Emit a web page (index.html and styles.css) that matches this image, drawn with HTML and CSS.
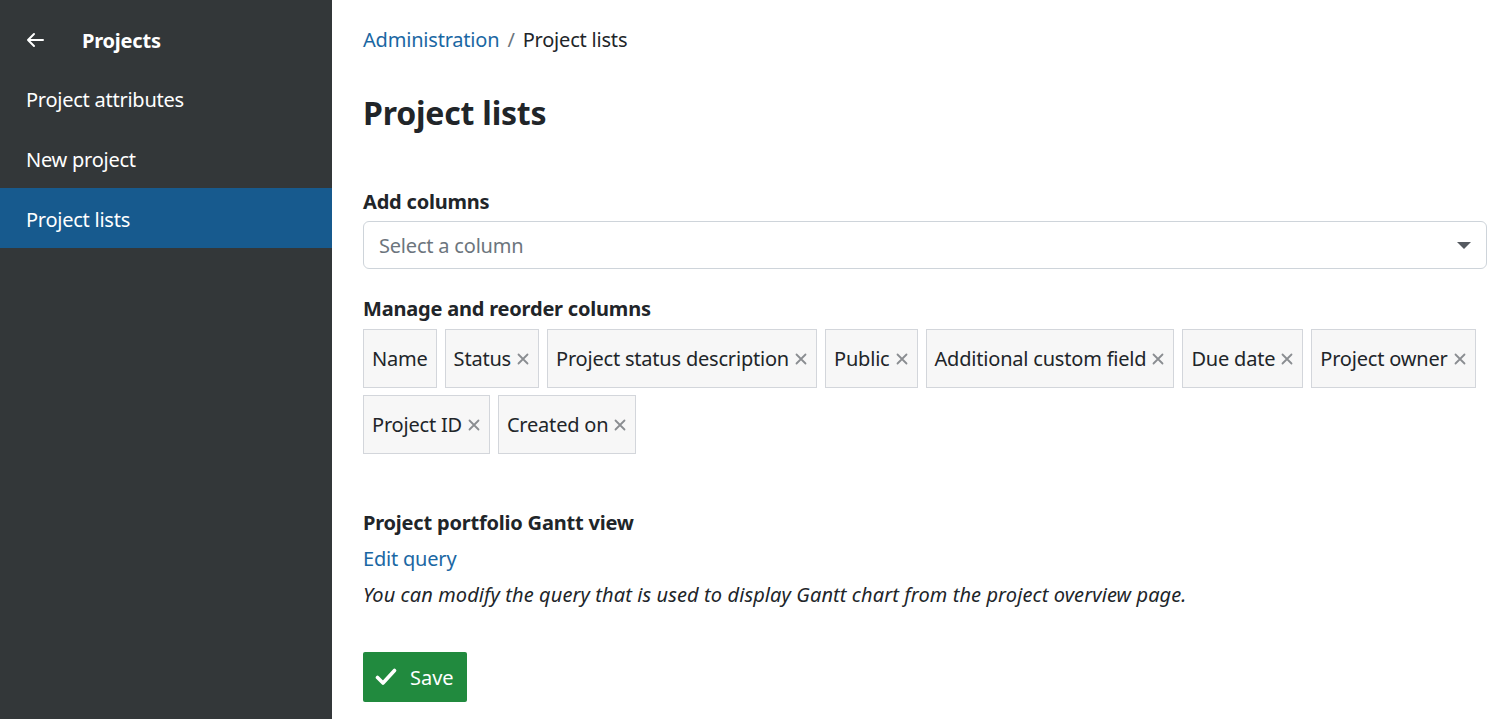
FILE: index.html
```html
<!DOCTYPE html>
<html>
<head>
<meta charset="utf-8">
<link rel="stylesheet" href="styles.css">
</head>
<body>
<div class="layout">
  <nav class="sidebar">
    <div class="side-head">
      <svg class="back" width="18" height="16" viewBox="0 0 18 16"><path d="M17 8H2M8 2L2 8l6 6" fill="none" stroke="#fff" stroke-width="2" stroke-linecap="round" stroke-linejoin="round"/></svg>
      <span class="side-title">Projects</span>
    </div>
    <a class="side-item">Project attributes</a>
    <a class="side-item">New project</a>
    <a class="side-item active">Project lists</a>
  </nav>
  <main class="content">
    <div class="breadcrumb"><a class="link">Administration</a><span class="sep">/</span><span>Project lists</span></div>
    <h1 class="title">Project lists</h1>
    <div class="label">Add columns</div>
    <div class="select">
      <span class="placeholder">Select a column</span>
      <span class="caret"></span>
    </div>
    <div class="label label2">Manage and reorder columns</div>
    <div class="chips">
      <span class="chip">Name</span>
      <span class="chip">Status<svg class="x" viewBox="0 0 12 12"><path d="M1.5 1.5l9 9M10.5 1.5l-9 9"/></svg></span>
      <span class="chip">Project status description<svg class="x" viewBox="0 0 12 12"><path d="M1.5 1.5l9 9M10.5 1.5l-9 9"/></svg></span>
      <span class="chip">Public<svg class="x" viewBox="0 0 12 12"><path d="M1.5 1.5l9 9M10.5 1.5l-9 9"/></svg></span>
      <span class="chip">Additional custom field<svg class="x" viewBox="0 0 12 12"><path d="M1.5 1.5l9 9M10.5 1.5l-9 9"/></svg></span>
      <span class="chip">Due date<svg class="x" viewBox="0 0 12 12"><path d="M1.5 1.5l9 9M10.5 1.5l-9 9"/></svg></span>
      <span class="chip">Project owner<svg class="x" viewBox="0 0 12 12"><path d="M1.5 1.5l9 9M10.5 1.5l-9 9"/></svg></span>
      <span class="chip">Project ID<svg class="x" viewBox="0 0 12 12"><path d="M1.5 1.5l9 9M10.5 1.5l-9 9"/></svg></span>
      <span class="chip">Created on<svg class="x" viewBox="0 0 12 12"><path d="M1.5 1.5l9 9M10.5 1.5l-9 9"/></svg></span>
    </div>
    <div class="label label3">Project portfolio Gantt view</div>
    <a class="link edit">Edit query</a>
    <p class="hint">You can modify the query that is used to display Gantt chart from the project overview page.</p>
    <button class="save"><svg width="22" height="18" viewBox="0 0 22 18"><path d="M2.5 9.5l5.5 5.5L19.5 2.5" fill="none" stroke="#fff" stroke-width="3.6" stroke-linecap="round" stroke-linejoin="round"/></svg><span>Save</span></button>
  </main>
</div>
</body>
</html>
```
FILE: styles.css
```css
html, body { margin: 0; padding: 0; }
body {
  font-family: "Noto Sans", "Open Sans", sans-serif;
  font-size: 20px;
  color: #212529;
  background: #fff;
}
.layout { display: flex; height: 719px; }
.sidebar {
  width: 332px;
  flex: none;
  background: #333739;
  color: #fff;
  display: flex;
  flex-direction: column;
}
.side-head {
  height: 68px;
  box-sizing: border-box;
  padding: 12px 0 0 26px;
  display: flex;
  align-items: center;
}
.back { margin-right: 38px; }
.side-title { font-weight: 700; font-size: 20px; letter-spacing: -0.2px; }
.side-item {
  height: 60px;
  box-sizing: border-box;
  padding: 3px 0 0 26px;
  display: flex;
  align-items: center;
  font-size: 20px;
  letter-spacing: -0.25px;
}
.side-item.active { background: #175a8e; }
.content {
  flex: 1;
  padding: 24px 11px 0 31px;
}
.link { color: #1a67a3; }
.breadcrumb { height: 32px; line-height: 32px; letter-spacing: -0.2px; }
.sep { color: #6c757d; margin: 0 8px; }
.title { font-size: 32px; font-weight: 700; margin: 35px 0 0; line-height: 44px; letter-spacing: -0.2px; }
.label { font-weight: 700; margin-top: 53px; line-height: 28px; letter-spacing: -0.2px; }
.select {
  margin-top: 5px;
  height: 48px;
  box-sizing: border-box;
  border: 1px solid #ced4da;
  border-radius: 6px;
  display: flex;
  align-items: center;
  padding: 0 16px 0 15px;
  justify-content: space-between;
}
.placeholder { color: #6c757d; letter-spacing: -0.2px; }
.caret {
  width: 0; height: 0;
  border-left: 7px solid transparent;
  border-right: 7px solid transparent;
  border-top: 7px solid #555a60;
  margin-right: -1px;
}
.label2 { margin-top: 26px; }
.chips {
  display: flex;
  flex-wrap: wrap;
  gap: 7px 8px;
  margin-top: 6px;
}
.chip {
  height: 59px;
  box-sizing: border-box;
  border: 1px solid #d3d6db;
  background: #f7f7f7;
  display: flex;
  align-items: center;
  padding: 0 8px;
  letter-spacing: -0.2px;
}
.x {
  width: 12px;
  height: 12px;
  margin-left: 6px;
  margin-right: 1px;
  fill: none;
  stroke: #8a8d91;
  stroke-width: 1.8;
  stroke-linecap: round;
}
.label3 { margin-top: 55px; }
.edit { display: block; margin-top: 8px; line-height: 28px; letter-spacing: -0.2px; }
.hint { font-style: italic; margin: 8px 0 0; line-height: 28px; letter-spacing: 0.1px; }
.save {
  margin-top: 43px;
  width: 104px;
  height: 50px;
  background: #218a3e;
  border: none;
  border-radius: 2px;
  color: #fff;
  font-family: inherit;
  font-size: 20px;
  display: flex;
  align-items: center;
  padding: 0 0 0 12px;
  gap: 13px;
}
```
